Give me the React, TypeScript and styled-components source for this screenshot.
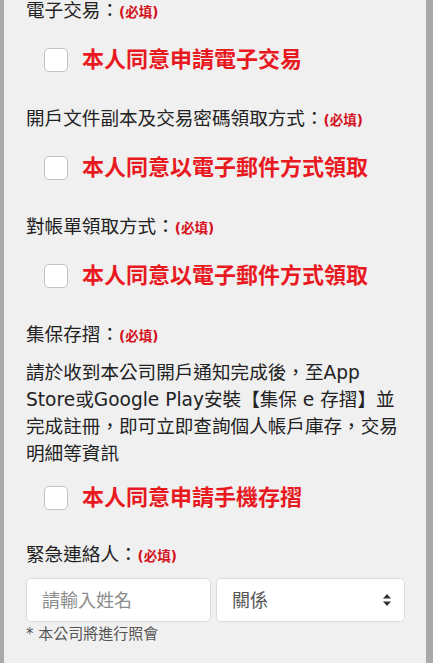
import styled, { createGlobalStyle } from 'styled-components';
import { useState } from 'react';

const GlobalStyle = createGlobalStyle`
  html, body {
    margin: 0;
    padding: 0;
    background: #f0f0f0;
  }

  body {
    font-family: 'DejaVu Sans', 'Noto Sans CJK TC', sans-serif;
    color: #222;
  }

  * {
    box-sizing: border-box;
  }
`;

const Frame = styled.div`
  min-height: 100vh;
  background: #f0f0f0;
  border-left: 4px solid #a9a9a9;
  border-right: 7px solid #a9a9a9;
  padding: 0 21px 0 22px;
`;

const Section = styled.section<{ $after?: number }>`
  margin-bottom: ${(p) => p.$after ?? 31}px;
`;

const Title = styled.h3`
  margin: 0;
  font-size: 18.6px;
  line-height: 22px;
  font-weight: 400;
  color: #222;
`;

const Required = styled.span`
  font-size: 13.5px;
  font-weight: 700;
  color: #d4121c;
`;

const CheckRow = styled.label<{ $gap?: number }>`
  display: flex;
  align-items: center;
  gap: 14px;
  height: 34px;
  padding-left: 18px;
  margin-top: ${(p) => p.$gap ?? 20}px;
  cursor: pointer;
`;

const Box = styled.input`
  appearance: none;
  -webkit-appearance: none;
  flex: none;
  width: 24px;
  height: 24px;
  margin: 0;
  background: #fff;
  border: 1.5px solid #c2c2c2;
  border-radius: 5px;

  &:checked {
    background: #e8191f;
    border-color: #e8191f;
  }
`;

const Agree = styled.span`
  font-size: 22px;
  line-height: 34px;
  font-weight: 700;
  color: #e8191f;
`;

const Notice = styled.p`
  margin: 12px 0 0;
  font-size: 18.6px;
  line-height: 27px;
  color: #222;
`;

const Fields = styled.div`
  display: grid;
  grid-template-columns: 185px 1fr;
  gap: 5px;
  margin-top: 11.5px;
`;

const TextInput = styled.input`
  height: 44px;
  width: 100%;
  padding: 0 15px;
  border: 1px solid #dcdcdc;
  border-radius: 5px;
  background: #fff;
  font-family: inherit;
  font-size: 18px;
  color: #333;
  outline: none;

  &::placeholder {
    color: #8c8c8c;
  }
`;

const SelectWrap = styled.div`
  position: relative;
`;

const Select = styled.select`
  appearance: none;
  -webkit-appearance: none;
  height: 44px;
  width: 100%;
  padding: 0 36px 0 15px;
  border: 1px solid #dcdcdc;
  border-radius: 5px;
  background: #fff;
  font-family: inherit;
  font-size: 18px;
  color: #555;
  outline: none;
`;

const Arrow = styled.svg`
  position: absolute;
  right: 14px;
  top: 50%;
  transform: translateY(-50%);
  pointer-events: none;
`;

const Hint = styled.div`
  margin-top: 2px;
  font-size: 15px;
  line-height: 20px;
  color: #555;
`;

const agreements = [
  { title: '電子交易', text: '本人同意申請電子交易' },
  { title: '開戶文件副本及交易密碼領取方式', text: '本人同意以電子郵件方式領取' },
  { title: '對帳單領取方式', text: '本人同意以電子郵件方式領取' },
];

export default function App() {
  const [checked, setChecked] = useState<boolean[]>([false, false, false, false]);
  const [name, setName] = useState('');
  const [relation, setRelation] = useState('');

  const toggle = (i: number) => {
    const next = [...checked];
    next[i] = !next[i];
    setChecked(next);
  };

  return (
    <>
      <GlobalStyle />
      <Frame>
        {agreements.map((item, i) => (
          <Section key={i}>
            <Title>
              {item.title}：<Required>(必填)</Required>
            </Title>
            <CheckRow>
              <Box type="checkbox" checked={checked[i]} onChange={() => toggle(i)} />
              <Agree>{item.text}</Agree>
            </CheckRow>
          </Section>
        ))}

        <Section $after={28.5}>
          <Title>
            集保存摺：<Required>(必填)</Required>
          </Title>
          <Notice>
            請於收到本公司開戶通知完成後，至App Store或Google Play安裝【集保 e 存摺】並完成註冊，即可立即查詢個人帳戶庫存，交易明細等資訊
          </Notice>
          <CheckRow $gap={14}>
            <Box type="checkbox" checked={checked[3]} onChange={() => toggle(3)} />
            <Agree>本人同意申請手機存摺</Agree>
          </CheckRow>
        </Section>

        <section>
          <Title>
            緊急連絡人：<Required>(必填)</Required>
          </Title>
          <Fields>
            <TextInput
              type="text"
              placeholder="請輸入姓名"
              value={name}
              onChange={(e) => setName(e.target.value)}
            />
            <SelectWrap>
              <Select value={relation} onChange={(e) => setRelation(e.target.value)}>
                <option value="">關係</option>
                <option value="parent">父母</option>
                <option value="spouse">配偶</option>
                <option value="child">子女</option>
                <option value="other">其他</option>
              </Select>
              <Arrow width="8" height="12" viewBox="0 0 8 12">
                <path d="M4 0L8 4.6H0Z M4 12L0 7.4H8Z" fill="#333" />
              </Arrow>
            </SelectWrap>
          </Fields>
          <Hint>* 本公司將進行照會</Hint>
        </section>
      </Frame>
    </>
  );
}
